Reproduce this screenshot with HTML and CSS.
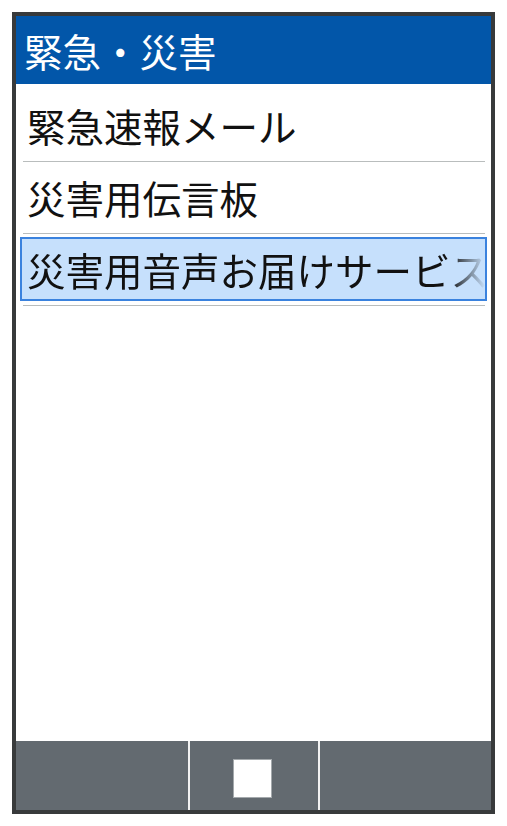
FILE: index.html
```html
<!DOCTYPE html>
<html lang="ja">
<head>
  <meta charset="UTF-8" />
  <meta name="viewport" content="width=device-width, initial-scale=1.0" />
  <title>緊急・災害</title>
  <link rel="stylesheet" href="styles.css">
</head>
<body>
  <div class="phone">
    <header class="title-bar">緊急・災害</header>

    <ul class="menu">
      <li class="menu-item"><span class="label">緊急速報メール</span></li>
      <li class="menu-item"><span class="label">災害用伝言板</span></li>
      <li class="menu-item selected"><span class="label"><span class="fade">災害用音声お届けサービス</span></span></li>
    </ul>

    <footer class="softkeys">
      <div class="key"></div>
      <div class="key"><span class="center-mark"></span></div>
      <div class="key"></div>
    </footer>
  </div>
</body>
</html>
```

FILE: styles.css
```css
body {
  margin: 0;
  padding: 0;
  background-color: #ffffff;
  font-family: "Noto Sans CJK JP", "Noto Sans", sans-serif;
}
.phone {
  display: flex;
  flex-direction: column;
  width: 483px;
  height: 802px;
  margin: 12px;
  box-sizing: border-box;
  border: 4px solid #383a3b;
  background-color: #ffffff;
}
.title-bar {
  height: 68px;
  line-height: 68px;
  padding-left: 8px;
  background-color: #0256a9;
  color: #ffffff;
  font-size: 38.5px;
  white-space: nowrap;
}
.menu {
  flex: 1;
  list-style: none;
  margin: 0;
  padding: 6px 0 0;
}
.menu-item {
  display: flex;
  height: 72px;
  margin: 0 6px 0 7px;
  box-sizing: border-box;
  padding: 3px 0 4px;
  border-bottom: 1px solid #b9bdbd;
}
.label {
  display: block;
  flex: 1;
  margin: 0 -2px 0 -3px;
  padding-left: 5px;
  border: 2px solid transparent;
  overflow: hidden;
  white-space: nowrap;
  font-size: 38.5px;
  line-height: 60px;
  color: #111111;
}
.selected .label {
  background-color: #c6e0fc;
  border-color: #3a82de;
}
.fade {
  display: block;
  -webkit-mask-image: linear-gradient(to right, #000 calc(100% - 36px), transparent);
  mask-image: linear-gradient(to right, #000 calc(100% - 36px), transparent);
}
.softkeys {
  display: grid;
  grid-template-columns: 172px 128px 1fr;
  gap: 2px;
  height: 69px;
  background-color: #f2f2f2;
}
.key {
  display: flex;
  align-items: center;
  justify-content: center;
  background-color: #636a70;
}
.center-mark {
  width: 37px;
  height: 37px;
  margin: 6px 3px 0 0;
  background-color: #ffffff;
  border: 1px solid #a4a9ac;
}
```
